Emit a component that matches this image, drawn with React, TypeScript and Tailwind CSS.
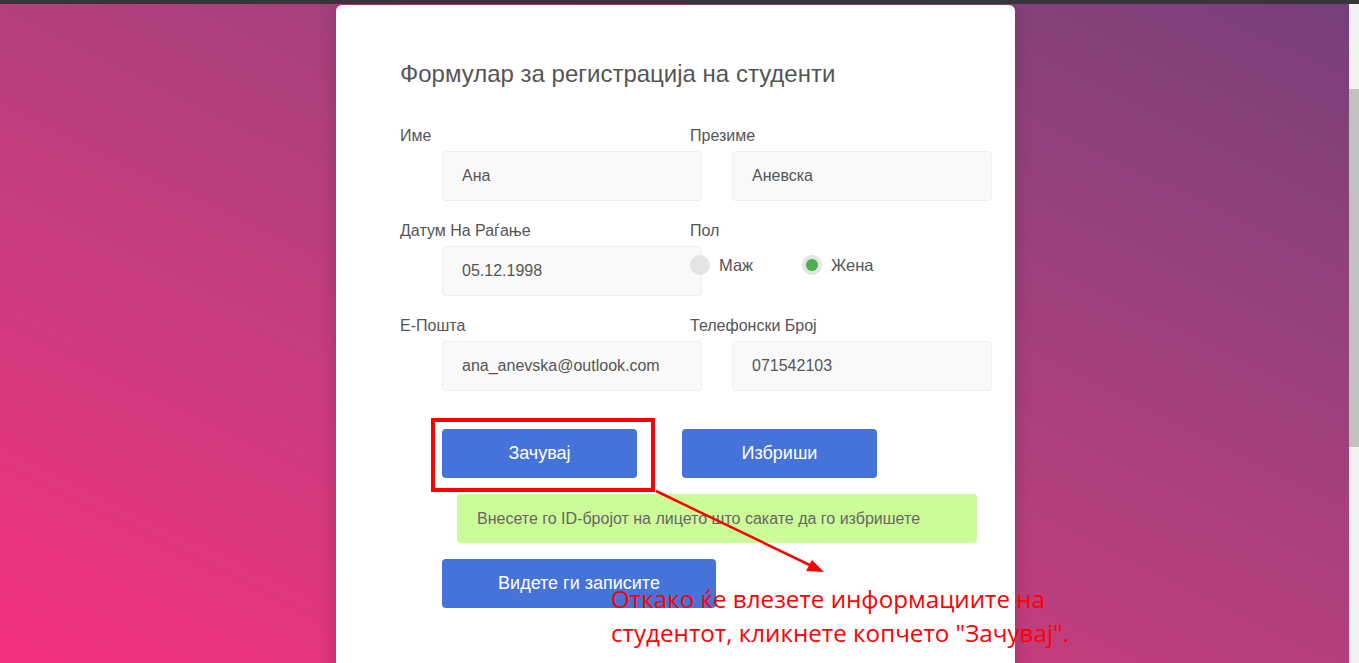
import React from "react";

const font = { fontFamily: '"Liberation Sans", Arial, sans-serif' };

function Field({ label, value }: { label: string; value: string }) {
    return (
        <div className="flex flex-col">
            <label className="h-[20px] text-[16px] leading-[20px] text-[#555]">{label}</label>
            <div className="mt-[5px] ml-[42px] flex h-[50px] w-[260px] items-center rounded-[4px] border border-[#eeeeee] bg-[#f9f9f9] px-[19px] text-[16px] text-[#555]">
                {value}
            </div>
        </div>
    );
}

function Radio({ label, checked }: { label: string; checked?: boolean }) {
    return (
        <div className="flex items-center gap-[9px]">
            <span className="flex h-[20px] w-[20px] items-center justify-center rounded-full bg-[#e3e3e3]">
                {checked && <span className="h-[12px] w-[12px] rounded-full bg-[#4cae4c]"></span>}
            </span>
            <span className="text-[16.5px] text-[#555]">{label}</span>
        </div>
    );
}

export default function App() {
    return (
        <div className="flex h-[663px] flex-col overflow-hidden bg-[#35363a]" style={font}>
            <div className="h-[4px] shrink-0 bg-[#35363a]"></div>
            <div className="flex min-h-0 flex-1">
                {/* Page */}
                <div className="relative flex-1 overflow-hidden bg-gradient-to-tr from-[#f42e7c] to-[#773f7a] pl-[2px]">
                    <div className="relative mx-auto mt-[1px] h-[700px] w-[679px] rounded-t-[6px] bg-white pl-[64px] pt-[54px] shadow-[0_0_18px_rgba(0,0,0,0.18)]">
                        <h1 className="h-[30px] text-[24px] leading-[30px] text-[#555]">
                            Формулар за регистрација на студенти
                        </h1>

                        <div className="mt-[37px] grid w-[580px] grid-cols-[290px_290px] gap-y-[20px]">
                            <Field label="Име" value="Ана" />
                            <Field label="Презиме" value="Аневска" />
                            <Field label="Датум На Раѓање" value="05.12.1998" />
                            <div className="flex flex-col">
                                <label className="h-[20px] text-[16px] leading-[20px] text-[#555]">Пол</label>
                                <div className="mt-[12px] flex">
                                    <div className="w-[112px]">
                                        <Radio label="Маж" />
                                    </div>
                                    <Radio label="Жена" checked />
                                </div>
                            </div>
                            <Field label="Е-Пошта" value="ana_anevska@outlook.com" />
                            <Field label="Телефонски Број" value="071542103" />
                        </div>

                        <div className="mt-[38px] ml-[42px] flex gap-[45px]">
                            <div className="relative">
                                <button className="h-[49px] w-[195px] rounded-[4px] bg-[#4573d9] text-[18px] text-white">
                                    Зачувај
                                </button>
                                <div className="absolute -left-[11px] -top-[11px] h-[74px] w-[224px] border-[4px] border-[#ff0000]"></div>
                            </div>
                            <button className="h-[49px] w-[195px] rounded-[4px] bg-[#4573d9] text-[18px] text-white">
                                Избриши
                            </button>
                        </div>

                        <div className="mt-[16px] ml-[57px] flex h-[49px] w-[520px] items-center rounded-[4px] bg-[#ccfc98] px-[20px] text-[16px] text-[#666]">
                            Внесете го ID-бројот на лицето што сакате да го избришете
                        </div>

                        <button className="mt-[16px] ml-[42px] h-[49px] w-[274px] rounded-[4px] bg-[#4573d9] text-[18px] text-white">
                            Видете ги записите
                        </button>

                        {/* annotation */}
                        <svg className="absolute left-0 top-0" width="680" height="660" viewBox="0 0 680 660">
                            <line x1="320" y1="486" x2="480" y2="563" stroke="#ff0000" strokeWidth="2.5" />
                            <polygon points="488,567 470,566 476,555" fill="#ff0000" />
                        </svg>
                        <div
                            className="absolute left-[275px] top-[577px] whitespace-nowrap text-[24.2px] leading-[34px] text-[#ff0000]"
                            style={{ fontFamily: '"Open Sans", "Noto Sans", sans-serif' }}
                        >
                            Откако ќе влезете информациите на
                            <br />
                            студентот, кликнете копчето "Зачувај".
                        </div>
                    </div>
                </div>
                {/* scrollbar */}
                <div className="flex w-[10px] shrink-0 flex-col bg-[#f1f1f1]">
                    <div className="h-[85px]"></div>
                    <div className="h-[358px] bg-[#c1c1c1]"></div>
                </div>
            </div>
        </div>
    );
}
